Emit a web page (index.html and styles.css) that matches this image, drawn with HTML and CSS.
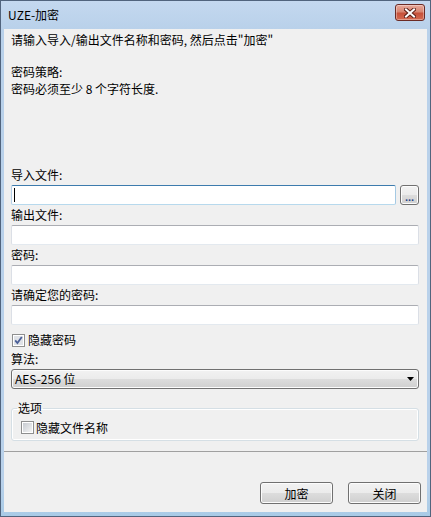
FILE: index.html
```html
<!DOCTYPE html>
<html lang="zh-CN">
<head>
    <meta charset="UTF-8">
    <title>UZE-加密</title>
    <link rel="stylesheet" href="styles.css">
</head>
<body>
    <div class="window">
        <div class="titlebar">
            <span class="title">UZE-加密</span>
            <button class="close-btn" title="关闭">
                <svg width="12" height="10" viewBox="0 0 12 10">
                    <path d="M2 1.5 L10 8.5 M10 1.5 L2 8.5" stroke="#5e2018" stroke-width="4" stroke-linecap="square"/>
                    <path d="M2 1.5 L10 8.5 M10 1.5 L2 8.5" stroke="#ffffff" stroke-width="2" stroke-linecap="square"/>
                </svg>
            </button>
        </div>
        <div class="client">
            <div class="content">
                <div class="intro">请输入导入/输出文件名称和密码, 然后点击"加密"</div>
                <div class="policy">
                    密码策略:<br>
                    密码必须至少 8 个字符长度.
                </div>

                <div class="fields">
                    <label class="field-label">导入文件:</label>
                    <div class="file-row">
                        <div class="input-wrap">
                            <input class="textbox focused" type="text">
                            <span class="caret"></span>
                        </div>
                        <button class="browse-btn">...</button>
                    </div>

                    <label class="field-label">输出文件:</label>
                    <input class="textbox" type="text">

                    <label class="field-label">密码:</label>
                    <input class="textbox" type="password">

                    <label class="field-label">请确定您的密码:</label>
                    <input class="textbox" type="password">
                </div>

                <label class="check-row">
                    <svg class="checkbox" width="13" height="13" viewBox="0 0 13 13">
                        <rect x="0.5" y="0.5" width="12" height="12" fill="#fff" stroke="#8e8f8f"/>
                        <rect x="2" y="2" width="9" height="9" fill="#dfe2e7"/>
                        <path d="M3.2 6.4 L5.4 9 L9.8 3" fill="none" stroke="#4a5f97" stroke-width="1.8"/>
                    </svg>
                    隐藏密码
                </label>

                <label class="field-label">算法:</label>
                <div class="combo">
                    <span>AES-256 位</span>
                    <svg width="7" height="4" viewBox="0 0 7 4"><path d="M0 0 H7 L3.5 4 Z" fill="#000"/></svg>
                </div>

                <fieldset class="group">
                    <legend>选项</legend>
                    <label class="check-row inner">
                        <svg class="checkbox" width="13" height="13" viewBox="0 0 13 13">
                            <defs>
                                <linearGradient id="cbg" x1="0" y1="0" x2="1" y2="1">
                                    <stop offset="0" stop-color="#c7cbd1"/>
                                    <stop offset="1" stop-color="#f4f4f4"/>
                                </linearGradient>
                            </defs>
                            <rect x="0.5" y="0.5" width="12" height="12" fill="#fff" stroke="#8e8f8f"/>
                            <rect x="2" y="2" width="9" height="9" fill="url(#cbg)"/>
                        </svg>
                        隐藏文件名称
                    </label>
                </fieldset>
            </div>

            <div class="separator"></div>

            <div class="footer">
                <button class="btn">加密</button>
                <button class="btn">关闭</button>
            </div>
        </div>
    </div>
</body>
</html>
```

FILE: styles.css
```css
html, body {
    margin: 0;
    padding: 0;
}
body {
    font-family: "Noto Sans CJK SC", "Liberation Sans", sans-serif;
    font-size: 12px;
    color: #000;
    background: #fff;
}
.window {
    width: 431px;
    height: 517px;
    box-sizing: border-box;
    border: 1px solid #51647d;
    padding: 0 3px 4px 3px;
    background: linear-gradient(to bottom, #c4d8ef 0, #b9d1ea 28px, #b9d1ea 480px, #a9cbe6 100%);
    display: flex;
    flex-direction: column;
}
.titlebar {
    height: 28px;
    display: flex;
    align-items: center;
    justify-content: space-between;
    padding-left: 4px;
}
.title {
    line-height: 28px;
    color: #000;
}
.close-btn {
    align-self: flex-start;
    margin-top: 3px;
    margin-right: 2px;
    width: 30px;
    height: 17px;
    padding: 0;
    border: 1px solid #6b2b25;
    border-radius: 3px;
    background: linear-gradient(to bottom, #e8a99b 0, #d88672 45%, #c6513a 55%, #d56a51 100%);
    box-shadow: inset 0 0 0 1px rgba(255,255,255,0.35);
    display: flex;
    align-items: center;
    justify-content: center;
}
.client {
    height: 483px;
    background: #f0f0f0;
    display: flex;
    flex-direction: column;
}
.content {
    padding: 0 8px 0 7px;
}
.intro {
    margin-top: 1px;
    line-height: 20px;
    padding-left: 0;
}
.policy {
    margin-top: 13px;
    line-height: 17px;
}
.fields {
    margin-top: 68px;
}
.field-label {
    display: block;
    line-height: 20px;
    height: 20px;
}
.textbox {
    display: block;
    width: 100%;
    height: 20px;
    box-sizing: border-box;
    margin: 0;
    border: 1px solid;
    border-color: #abadb3 #dbdfe6 #e3e9ef #dbdfe6;
    border-radius: 2px;
    background: #fff;
    outline: none;
    font: inherit;
    padding: 0 3px;
}
.textbox.focused {
    border-color: #3d7bad #a4c9e3 #b7d9ed #b5cfe7;
}
.file-row {
    display: flex;
    gap: 4px;
}
.input-wrap {
    position: relative;
    flex: 1;
}
.caret {
    position: absolute;
    left: 3px;
    top: 3px;
    width: 1px;
    height: 14px;
    background: #000;
}
.browse-btn {
    width: 19px;
    height: 20px;
    padding: 0;
    border: 1px solid #707070;
    border-radius: 3px;
    background: linear-gradient(to bottom, #f2f2f2 0, #ebebeb 50%, #dddddd 50%, #cfcfcf 100%);
    box-shadow: inset 0 0 0 1px #fcfcfc;
    font: bold 11px "Liberation Sans", sans-serif;
    color: #26468a;
    line-height: 22px;
    letter-spacing: 0;
}
.check-row {
    display: flex;
    align-items: center;
    gap: 3px;
    height: 18px;
    margin-top: 6px;
    line-height: 18px;
}
.checkbox {
    flex: none;
    margin-left: 1px;
}
.combo {
    height: 20px;
    box-sizing: border-box;
    border: 1px solid #707070;
    border-radius: 3px;
    background: linear-gradient(to bottom, #f2f2f2 0, #ebebeb 50%, #dddddd 50%, #cfcfcf 100%);
    box-shadow: inset 0 0 0 1px #fcfcfc;
    display: flex;
    align-items: center;
    justify-content: space-between;
    padding: 0 4px 0 3px;
    line-height: 18px;
}
.group {
    margin: 11px 0 0 0;
    padding: 0 8px 4px 8px;
    border: 1px solid #d5dfe5;
    border-radius: 3px;
    box-shadow: inset 0 0 0 1px #fff;
}
.group legend {
    padding: 0 1px;
    margin-left: -3px;
    line-height: 16px;
}
.check-row.inner {
    margin-top: 3px;
    height: 17px;
    gap: 2px;
}
.separator {
    margin-top: 10px;
    height: 1px;
    background: #a0a0a0;
}
.footer {
    display: flex;
    justify-content: flex-end;
    gap: 15px;
    padding: 30px 6px 0 0;
}
.btn {
    width: 73px;
    height: 22px;
    padding: 0;
    border: 1px solid #707070;
    border-radius: 3px;
    background: linear-gradient(to bottom, #f2f2f2 0, #ebebeb 50%, #dddddd 50%, #cfcfcf 100%);
    box-shadow: inset 0 0 0 1px #fcfcfc;
    font: inherit;
    color: #000;
}
```
